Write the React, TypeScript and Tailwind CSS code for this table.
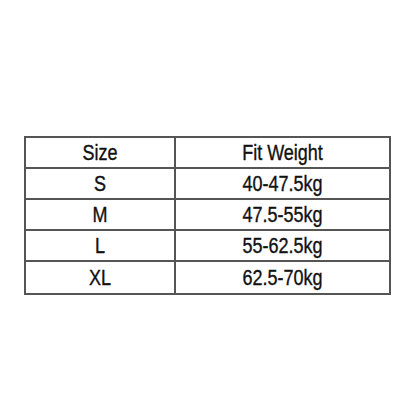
import React from 'react';

const rows: [string, string][] = [
    ['Size', 'Fit Weight'],
    ['S', '40-47.5kg'],
    ['M', '47.5-55kg'],
    ['L', '55-62.5kg'],
    ['XL', '62.5-70kg'],
];

const App: React.FC = () => {
    return (
        <div className="w-[416px] h-[416px] bg-white pt-[136px] pl-[24px]" style={{ fontFamily: '"Liberation Sans", Arial, sans-serif' }}>
            <div className="w-[367px] border-2 border-[#555] text-[18px] text-[#111]">
                {rows.map(([size, weight], idx) => (
                    <div
                        key={size}
                        className={`flex h-[31px] ${idx < rows.length - 1 ? 'border-b-2 border-[#555]' : 'h-[29px]'}`}
                    >
                        <div className="w-[150px] border-r-2 border-[#555] flex items-center justify-center pt-[1px]">
                            <span className="inline-block scale-y-[1.22] [-webkit-text-stroke:0.3px_#111]">{size}</span>
                        </div>
                        <div className="flex-1 flex items-center justify-center pt-[1px]">
                            <span className="inline-block scale-y-[1.22] [-webkit-text-stroke:0.3px_#111]">{weight}</span>
                        </div>
                    </div>
                ))}
            </div>
        </div>
    );
};

export default App;
